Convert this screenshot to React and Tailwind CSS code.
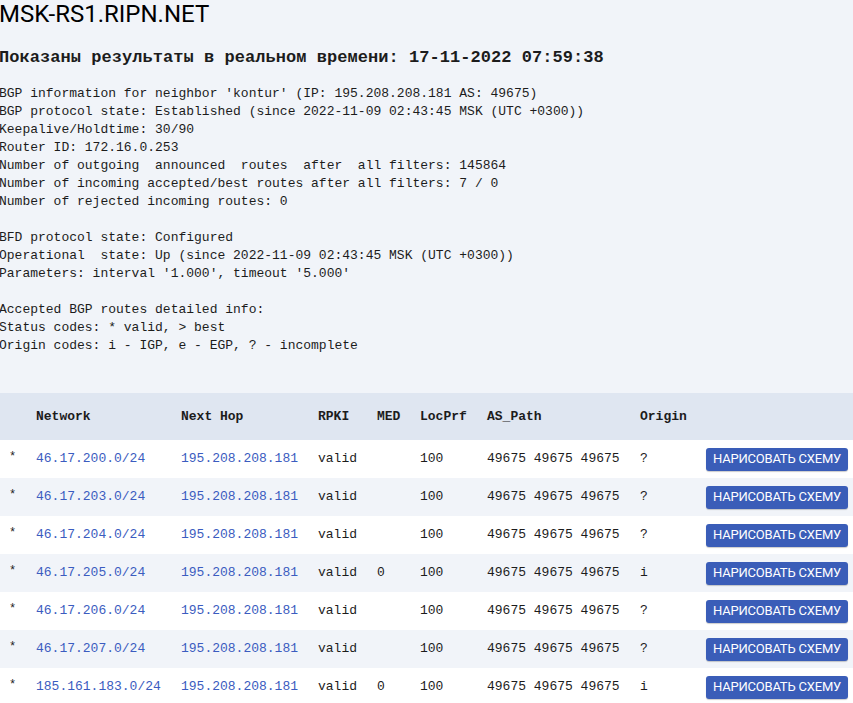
import React from "react";

const rows = [
  ["46.17.200.0/24", "", "?"],
  ["46.17.203.0/24", "", "?"],
  ["46.17.204.0/24", "", "?"],
  ["46.17.205.0/24", "0", "i"],
  ["46.17.206.0/24", "", "?"],
  ["46.17.207.0/24", "", "?"],
  ["185.161.183.0/24", "0", "i"],
];

const info = `BGP information for neighbor 'kontur' (IP: 195.208.208.181 AS: 49675)
BGP protocol state: Established (since 2022-11-09 02:43:45 MSK (UTC +0300))
Keepalive/Holdtime: 30/90
Router ID: 172.16.0.253
Number of outgoing  announced  routes  after  all filters: 145864
Number of incoming accepted/best routes after all filters: 7 / 0
Number of rejected incoming routes: 0

BFD protocol state: Configured
Operational  state: Up (since 2022-11-09 02:43:45 MSK (UTC +0300))
Parameters: interval '1.000', timeout '5.000'

Accepted BGP routes detailed info:
Status codes: * valid, > best
Origin codes: i - IGP, e - EGP, ? - incomplete`;

export default function App() {
  return (
    <div className="min-h-[703px] w-[853px] overflow-hidden bg-[#f1f4f9] text-[#1c1c1c]">
      <div className="-ml-[1px]">
        <h1 className="text-[24px] leading-[28px] pt-[0px] font-['Roboto',sans-serif] font-normal text-black">
          MSK-RS1.RIPN.NET
        </h1>
        <h2 className="mt-[19px] text-[17px] leading-[22px] font-bold font-['Liberation_Mono',monospace] tracking-[0.05px]">
          Показаны результаты в реальном времени: 17-11-2022 07:59:38
        </h2>
        <pre className="mt-[16px] text-[13px] leading-[18px] font-['Liberation_Mono',monospace] whitespace-pre">
          {info}
        </pre>
      </div>
      <table className="mt-[38px] table-fixed border-collapse w-[860px] font-['Liberation_Mono',monospace] text-[13px]">
        <colgroup>
          <col className="w-[28px]" />
          <col className="w-[145px]" />
          <col className="w-[137px]" />
          <col className="w-[59px]" />
          <col className="w-[43px]" />
          <col className="w-[67px]" />
          <col className="w-[153px]" />
          <col className="w-[66px]" />
          <col className="w-[162px]" />
        </colgroup>
        <thead>
          <tr className="bg-[#dfe6f1] h-[47px] text-left">
            <th className="pl-[9px]"></th>
            <th className="pl-[8px] font-bold">Network</th>
            <th className="pl-[8px] font-bold">Next Hop</th>
            <th className="pl-[8px] font-bold">RPKI</th>
            <th className="pl-[8px] font-bold">MED</th>
            <th className="pl-[8px] font-bold">LocPrf</th>
            <th className="pl-[8px] font-bold">AS_Path</th>
            <th className="pl-[8px] font-bold">Origin</th>
            <th></th>
          </tr>
        </thead>
        <tbody>
          {rows.map((r, i) => (
            <tr key={i} className={`h-[38px] ${i % 2 === 0 ? "bg-white" : "bg-[#f1f4f9]"}`}>
              <td className="pl-[9px] align-middle">
                <span className="relative -top-[2px] text-[12px]">*</span>
              </td>
              <td className="pl-[8px] text-[#3b5cc0]">{r[0]}</td>
              <td className="pl-[8px] text-[#3b5cc0]">195.208.208.181</td>
              <td className="pl-[8px]">valid</td>
              <td className="pl-[8px]">{r[1]}</td>
              <td className="pl-[8px]">100</td>
              <td className="pl-[8px]">49675 49675 49675</td>
              <td className="pl-[8px]">{r[2]}</td>
              <td className="pl-[8px]">
                <button className="h-[23px] w-[142px] rounded-[3px] bg-[#3a5db8] text-white text-[13px] font-['Roboto',sans-serif] uppercase tracking-[-0.2px] shadow-[0_1px_1px_rgba(0,0,0,0.2)]">
                  Нарисовать схему
                </button>
              </td>
            </tr>
          ))}
        </tbody>
      </table>
    </div>
  );
}
